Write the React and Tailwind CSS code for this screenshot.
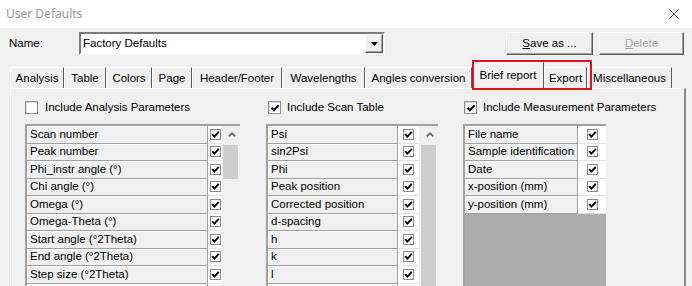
import React from "react";

const GridCheck = () => (
  <div className="w-[11px] h-[11px] border border-[#8a8a8a] bg-white flex items-center justify-center">
    <svg width="9" height="9" viewBox="0 0 9 9">
      <path d="M1.2 4.2 L3.4 6.6 L7.8 1.8" stroke="#000" strokeWidth="1.9" fill="none" />
    </svg>
  </div>
);

const BigCheck = ({ checked }) => (
  <div className="w-[13px] h-[13px] shrink-0 border border-[#8f8f8f] bg-white flex items-center justify-center shadow-[inset_1px_1px_0_#dcdcdc]">
    {checked && (
      <svg width="10" height="10" viewBox="0 0 10 10">
        <path d="M1.5 4.8 L3.9 7.3 L8.6 2.2" stroke="#000" strokeWidth="2" fill="none" />
      </svg>
    )}
  </div>
);

const Chevron = () => (
  <svg width="8" height="5" viewBox="0 0 8 5">
    <path d="M0.8 4.4 L4 1.2 L7.2 4.4" stroke="#606060" strokeWidth="1.6" fill="none" />
  </svg>
);

function Row({ label, nameW, checkW, empty }) {
  return (
    <div className="flex h-[17.5px]">
      <div
        className="bg-[#f0f0f0] border-b border-r border-[#a0a0a0] shadow-[inset_1px_1px_0_#ffffff] flex items-center pl-[3px] whitespace-nowrap overflow-hidden"
        style={{ width: nameW }}
      >
        {label}
      </div>
      <div
        className="bg-white border-b border-[#e3e3e3] flex items-center justify-center"
        style={{ width: checkW }}
      >
        {!empty && <GridCheck />}
      </div>
    </div>
  );
}

function Tab({ label, w, selected }) {
  return (
    <div
      className={
        "flex justify-center border-l border-t border-white border-r border-r-[#5a5a5a] rounded-tl-[2px] " +
        (selected ? "h-[26px] pt-[7px]" : "h-[21px] pt-[5px]")
      }
      style={{ width: w }}
    >
      <span className="whitespace-nowrap">{label}</span>
    </div>
  );
}

const col1 = [
  "Scan number",
  "Peak number",
  "Phi_instr angle (°)",
  "Chi angle (°)",
  "Omega (°)",
  "Omega-Theta (°)",
  "Start angle (°2Theta)",
  "End angle (°2Theta)",
  "Step size (°2Theta)",
];
const col2 = ["Psi", "sin2Psi", "Phi", "Peak position", "Corrected position", "d-spacing", "h", "k", "l"];
const col3 = ["File name", "Sample identification", "Date", "x-position (mm)", "y-position (mm)"];

export default function App() {
  return (
    <div className="w-[692px] h-[286px] overflow-hidden relative bg-[#f0f0f0] font-['Liberation_Sans',Arial,sans-serif] text-[11.5px] text-black leading-none flex flex-col">
      {/* title bar */}
      <div className="h-[28px] shrink-0 bg-white flex items-center justify-between pl-[6px] pr-[13px]">
        <span className="font-['Noto_Sans',sans-serif] text-[12px] text-[#9a9a9a]">User Defaults</span>
        <svg width="10" height="10" viewBox="0 0 10 10">
          <path d="M0.5 0.5 L9.5 9.5 M9.5 0.5 L0.5 9.5" stroke="#555" strokeWidth="1" />
        </svg>
      </div>

      {/* name row */}
      <div className="flex items-center h-[23px] mt-[4px] shrink-0">
        <span className="ml-[9px] w-[70px]">Name:</span>
        <div className="w-[306px] h-[23px] bg-white border-2 border-t-[#7a7a7a] border-l-[#7a7a7a] border-b-[#f8f8f8] border-r-[#f8f8f8] flex items-center">
          <span className="pl-[2px] flex-1">Factory Defaults</span>
          <div className="w-[18px] h-[19px] bg-[#f0f0f0] border border-t-white border-l-white border-b-[#5a5a5a] border-r-[#5a5a5a] shadow-[inset_-1px_-1px_0_#a0a0a0] flex items-center justify-center">
            <svg width="7" height="4" viewBox="0 0 7 4">
              <path d="M0 0 L7 0 L3.5 4 Z" fill="#000" />
            </svg>
          </div>
        </div>
        <div className="ml-[121px] w-[87px] h-[23px] border border-t-white border-l-white border-b-[#5a5a5a] border-r-[#5a5a5a] shadow-[inset_-1px_-1px_0_#a0a0a0] flex items-center justify-center">
          <span>
            <span className="underline">S</span>ave as ...
          </span>
        </div>
        <div className="ml-[6px] w-[85px] h-[23px] border border-t-white border-l-white border-b-[#5a5a5a] border-r-[#5a5a5a] shadow-[inset_-1px_-1px_0_#a0a0a0] flex items-center justify-center">
          <span className="text-[#a0a0a0] [text-shadow:1px_1px_0_#ffffff]">
            <span className="underline">D</span>elete
          </span>
        </div>
      </div>

      {/* tabs */}
      <div className="flex items-end h-[26px] mt-[7px] pl-[10px] shrink-0">
        <Tab label="Analysis" w={54} />
        <Tab label="Table" w={42} />
        <Tab label="Colors" w={46} />
        <Tab label="Page" w={40} />
        <Tab label="Header/Footer" w={90} />
        <Tab label="Wavelengths" w={83} />
        <Tab label="Angles conversion" w={107} />
        <Tab label="Brief report" w={72} selected />
        <Tab label="Export" w={43} />
        <Tab label="Miscellaneous" w={85} />
      </div>

      {/* panel */}
      <div className="ml-[10px] w-[676px] flex-1 border-l border-t border-white border-r-2 border-r-[#8a8a8a] flex pt-[12px] pl-[14px]">
        {/* col 1 */}
        <div className="w-[215px] shrink-0 flex flex-col">
          <div className="flex items-center h-[13px]">
            <BigCheck checked={false} />
            <span className="ml-[7px] whitespace-nowrap">Include Analysis Parameters</span>
          </div>
          <div className="mt-[10px] border-t-2 border-l-2 border-[#a0a0a0] flex">
            <div className="flex flex-col">
              {col1.map((l) => (
                <Row key={l} label={l} nameW={181} checkW={14} />
              ))}
              <Row label="" nameW={181} checkW={14} />
            </div>
            <div className="w-[18px] flex flex-col">
              <div className="h-[17px] flex items-center justify-center pl-[1px]">
                <Chevron />
              </div>
              <div className="ml-[1px] mt-[2px] w-[15px] h-[34px] bg-[#cdcdcd]" />
            </div>
          </div>
        </div>

        {/* col 2 */}
        <div className="ml-[26px] w-[172px] shrink-0 flex flex-col">
          <div className="flex items-center h-[13px] pl-[2px]">
            <BigCheck checked />
            <span className="ml-[6px] whitespace-nowrap">Include Scan Table</span>
          </div>
          <div className="mt-[10px] border-t-2 border-l-2 border-[#a0a0a0] flex">
            <div className="flex flex-col">
              {col2.map((l) => (
                <Row key={l} label={l} nameW={130} checkW={21} />
              ))}
              <Row label="" nameW={130} checkW={21} />
            </div>
            <div className="w-[19px] flex flex-col">
              <div className="h-[17px] flex items-center justify-center pl-[2px]">
                <Chevron />
              </div>
              <div className="ml-[2px] mt-[2px] w-[15px] h-[200px] bg-[#cdcdcd]" />
            </div>
          </div>
        </div>

        {/* col 3 */}
        <div className="ml-[25px] w-[143px] shrink-0 flex flex-col">
          <div className="flex items-center h-[13px] pl-[1px]">
            <BigCheck checked />
            <span className="ml-[6px] whitespace-nowrap">Include Measurement Parameters</span>
          </div>
          <div className="mt-[10px] border-t-2 border-l-2 border-[#a0a0a0] flex flex-col flex-1">
            {col3.map((l) => (
              <Row key={l} label={l} nameW={113} checkW={28} />
            ))}
            <div className="flex-1 bg-[#ababab]" />
          </div>
        </div>
      </div>

      {/* annotation box */}
      <div className="absolute left-[472px] top-[60px] w-[120px] h-[30px] border-2 border-[#e0141c]" />
    </div>
  );
}
